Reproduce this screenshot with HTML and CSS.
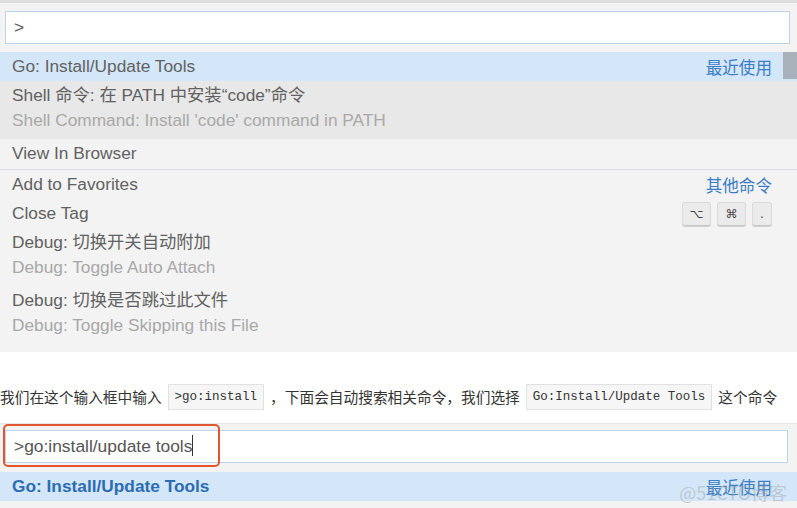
FILE: index.html
```html
<!DOCTYPE html>
<html lang="zh-CN">
<head>
  <meta charset="UTF-8">
  <meta name="viewport" content="width=device-width, initial-scale=1.0">
  <title>Go: Install/Update Tools</title>
  <link rel="stylesheet" href="styles.css">
</head>
<body>
  <!-- Command palette, first screenshot -->
  <div class="palette">
    <div class="palette-input">&gt;</div>
    <ul class="cmd-list">
      <li class="cmd selected">
        <span class="cmd-label">Go: Install/Update Tools</span>
        <span class="cmd-group">最近使用</span>
      </li>
      <li class="cmd hover double">
        <span class="cmd-label">Shell 命令: 在 PATH 中安装“code”命令</span>
        <span class="cmd-detail">Shell Command: Install 'code' command in PATH</span>
      </li>
      <li class="cmd">
        <span class="cmd-label">View In Browser</span>
      </li>
      <li class="cmd separated">
        <span class="cmd-label">Add to Favorites</span>
        <span class="cmd-group">其他命令</span>
      </li>
      <li class="cmd">
        <span class="cmd-label">Close Tag</span>
        <span class="keys">
          <kbd>⌥</kbd><kbd>⌘</kbd><kbd class="small">.</kbd>
        </span>
      </li>
      <li class="cmd double">
        <span class="cmd-label">Debug: 切换开关自动附加</span>
        <span class="cmd-detail">Debug: Toggle Auto Attach</span>
      </li>
      <li class="cmd double">
        <span class="cmd-label">Debug: 切换是否跳过此文件</span>
        <span class="cmd-detail">Debug: Toggle Skipping this File</span>
      </li>
      <div class="scrollbar"></div>
    </ul>
  </div>

  <!-- Article text -->
  <p class="article">我们在这个输入框中输入<code>&gt;go:install</code>，下面会自动搜索相关命令，我们选择<code>Go:Install/Update Tools</code>这个命令</p>

  <!-- Command palette, second screenshot -->
  <div class="palette second">
    <div class="palette-input">&gt;go:install/update tools<span class="caret"></span></div>
    <div class="highlight"></div>
    <ul class="cmd-list">
      <li class="cmd selected">
        <span class="cmd-label strong">Go: Install/Update Tools</span>
        <span class="cmd-group">最近使用</span>
      </li>
    </ul>
    <div class="watermark">@51CTO博客</div>
  </div>
</body>
</html>
```

FILE: styles.css
```css
/* General Styles */
body {
  margin: 0;
  font-family: "Liberation Sans", Arial, "Noto Sans CJK SC", sans-serif;
  background: #fff;
  width: 797px;
  overflow: hidden;
}

/* Palette */
.palette {
  background: #f3f3f3;
  border-top: 3px solid #dedede;
  padding: 8px 0 8px;
  position: relative;
}

.palette-input {
  margin: 0 7px 0 5px;
  height: 31px;
  background: #fff;
  border: 1px solid #bcd3ea;
  color: #555;
  font-size: 17.4px;
  line-height: 31px;
  padding-left: 8px;
}

.cmd-list {
  list-style: none;
  margin: 8px 0 0;
  padding: 0;
  position: relative;
}

.cmd {
  display: flex;
  align-items: center;
  height: 29px;
  padding: 0 25px 0 12px;
  font-size: 17.3px;
  color: #616161;
}

.cmd.double {
  display: block;
  height: auto;
  padding-top: 2px;
  padding-bottom: 6px;
}

.cmd.double span {
  display: block;
  line-height: 25px;
}

.cmd-label {
  flex: 1;
  white-space: nowrap;
}

.cmd-detail {
  color: #a8a8a8;
}

.cmd.selected {
  background: #d4e7f9;
}

.cmd.hover {
  background: #e8e8e8;
}

.cmd.separated {
  border-top: 1px solid #dcdde5;
  margin-top: 1px;
}

.cmd-group {
  color: #3a7cc6;
  font-size: 16.6px;
}

.scrollbar {
  position: absolute;
  top: 0;
  right: 0;
  width: 14px;
  height: 27px;
  background: #a9b2bb;
}

/* Keyboard keys */
.keys {
  display: flex;
  gap: 6px;
}

kbd {
  display: inline-block;
  width: 27px;
  height: 22px;
  line-height: 22px;
  text-align: center;
  background: #ebebeb;
  border: 1px solid #dadada;
  border-bottom-color: #c8c8c8;
  border-radius: 3px;
  box-shadow: 0 1px 0 #d0d0d0;
  font-family: "DejaVu Sans", sans-serif;
  font-size: 12px;
  color: #444;
}

kbd.small {
  width: 18px;
}

/* Article text */
.article {
  margin: 32px 0 0;
  height: 39px;
  font-size: 14.7px;
  color: #333;
  font-family: "Noto Sans CJK SC", "Liberation Sans", sans-serif;
  white-space: nowrap;
  line-height: 26px;
}

.article code {
  display: inline-block;
  font-family: "Liberation Mono", monospace;
  font-size: 12.5px;
  line-height: 24px;
  padding: 0 6px;
  margin: 0 6px;
  background: #f6f6f6;
  border: 1px solid #e1e1e1;
  color: #333;
  vertical-align: top;
}

/* Second palette */
.second {
  border-top: 1px solid #e3e6ea;
  padding-top: 6px;
  padding-bottom: 8px;
}

.second .palette-input {
  margin-right: 9px;
}

.second .cmd-list {
  margin-top: 9px;
}

.strong {
  font-weight: bold;
  color: #2b6cb3;
}

.caret {
  display: inline-block;
  width: 1px;
  height: 21px;
  background: #333;
  vertical-align: -4px;
}

.highlight {
  position: absolute;
  left: 3px;
  top: 0;
  width: 213px;
  height: 39px;
  border: 2px solid #e2552f;
  border-radius: 5px;
}

.watermark {
  position: absolute;
  right: 10px;
  bottom: 4px;
  font-family: "Noto Sans CJK SC", sans-serif;
  font-size: 18px;
  color: rgba(150, 150, 150, 0.4);
}
```
